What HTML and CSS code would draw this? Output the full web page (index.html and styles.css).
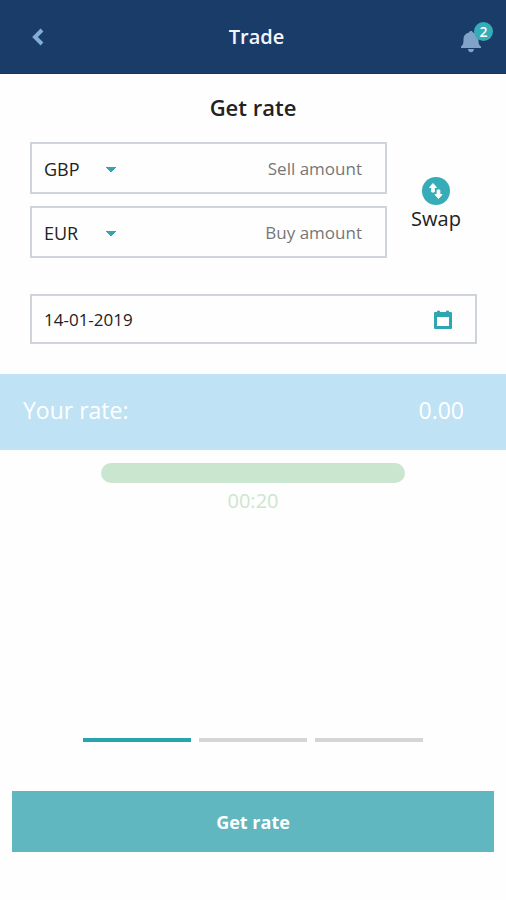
FILE: index.html
```html
<!DOCTYPE html>
<html lang="en">
<head>
<meta charset="utf-8">
<meta name="viewport" content="width=device-width, initial-scale=1">
<title>Trade</title>
<link rel="stylesheet" href="styles.css">
</head>
<body>
<header class="topbar">
  <button class="icon-button" type="button" aria-label="Back">
    <svg class="back-icon" width="12" height="18" viewBox="0 0 12 18"><path d="M10 2 3 9l7 7"/></svg>
  </button>
  <h1 class="topbar-title">Trade</h1>
  <button class="icon-button bell-button" type="button" aria-label="Notifications">
    <svg class="bell-icon" width="20" height="22" viewBox="0 0 20 22"><path d="M10 0C9 0 8.200.6 8 1.500 4.200 2.400 2.500 5 2.500 8.500c0 4-.5 5.500-2.500 7V17h20v-1.500c-2-1.500-2.500-3-2.500-7 0-3.500-1.700-6.100-5.500-7C11.800.6 11 0 10 0ZM7 18c.2 2 1.300 3.300 3 3.300s2.800-1.300 3-3.300Z"/></svg>
    <span class="badge">2</span>
  </button>
</header>
<main class="page">
  <h2 class="heading">Get rate</h2>
  <form class="form" id="rate-form">
    <div class="exchange">
      <div class="amounts">
        <div class="field">
          <select class="currency" aria-label="Sell currency"><option>GBP</option><option>EUR</option></select>
          <input class="amount" type="text" inputmode="decimal" placeholder="Sell amount" aria-label="Sell amount">
        </div>
        <div class="field">
          <select class="currency" aria-label="Buy currency"><option>EUR</option><option>GBP</option></select>
          <input class="amount" type="text" inputmode="decimal" placeholder="Buy amount" aria-label="Buy amount">
        </div>
      </div>
      <button class="swap" type="button">
        <svg width="28" height="28" viewBox="0 0 28 28"><circle cx="14" cy="14" r="14" fill="#35acb8"/><path fill="#fff" stroke="#fff" stroke-linejoin="round" d="m11 6.500 3.500 4h-2.200V15H9.700v-4.500H7.500ZM16.500 21.500 13 17.500h2.200V13h2.600v4.500H20Z"/></svg>
        <span>Swap</span>
      </button>
    </div>
    <div class="field date-field">
      <input class="date" type="text" value="14-01-2019" aria-label="Date">
      <button class="icon-button" type="button" aria-label="Choose date">
        <svg width="18" height="20" viewBox="0 0 18 20"><path fill="#2fa6b2" fill-rule="evenodd" d="M1 2h2V1q1.500-1 3 0v1h6V1q1.500-1 3 0v1h2q1 0 1 1v15q0 1-1 1H1q-1 0-1-1V3q0-1 1-1Zm2 5v9h12V7Z"/></svg>
      </button>
    </div>
  </form>
  <section class="rate"><span>Your rate:</span><span>0.00</span></section>
  <div class="timer">
    <div class="timer-bar"></div>
    <span>00:20</span>
  </div>
  <div class="steps"><span class="step current"></span><span class="step"></span><span class="step"></span></div>
  <button class="submit" type="submit" form="rate-form">Get rate</button>
</main>
</body>
</html>
```
FILE: styles.css
```css
* { box-sizing: border-box; }

body {
  margin: 0;
  min-height: 100vh;
  display: flex;
  flex-direction: column;
  background: #fefefe;
  color: #222;
  font-family: "Open Sans", "Noto Sans", sans-serif;
}

button, input, select { font: inherit; color: inherit; }

button, input {
  border: 0;
  padding: 0;
  background: none;
}

svg { display: block; }

.topbar {
  display: grid;
  grid-template-columns: 1fr auto 1fr;
  align-items: center;
  padding: 0 25px 0 32px;
  min-height: 74px;
  background: #193c68;
  border-bottom: 1px solid #0f3a6c;
  color: #f4f6ff;
}

.icon-button {
  cursor: pointer;
  justify-self: start;
}

.back-icon {
  fill: none;
  stroke: #83acd6;
  stroke-width: 4;
}

.topbar-title {
  margin: 0;
  font-size: 20px;
  line-height: 28px;
  font-weight: 600;
}

.bell-button {
  position: relative;
  justify-self: end;
  margin-top: 10px;
}

.bell-icon { fill: #81a2c9; }

.badge {
  position: absolute;
  top: -9px;
  right: -12px;
  width: 19px;
  height: 19px;
  border-radius: 50%;
  background: #35acb8;
  color: #fff;
  font-size: 14px;
  line-height: 19px;
  font-weight: 600;
  text-align: center;
}

.page {
  flex: 1;
  display: flex;
  flex-direction: column;
}

.heading {
  margin: 18px 0 20px;
  font-size: 22px;
  line-height: 30px;
  font-weight: 600;
  text-align: center;
}

.form {
  display: grid;
  gap: 36px;
  padding: 0 29px 0 30px;
}

.exchange {
  display: grid;
  grid-template-columns: 1fr 90px;
  align-items: center;
}

.amounts {
  display: grid;
  gap: 12px;
}

.field {
  display: flex;
  align-items: center;
  min-height: 52px;
  padding: 2px 23px 0 12px;
  border: 2px solid #cfd3da;
}

.currency {
  flex: none;
  width: 72px;
  border: 0;
  padding: 0;
  appearance: none;
  background: conic-gradient(from -45deg at 50% 100%, #2fa6b2 90deg, transparent 0) right center / 10px 5px no-repeat;
  font-size: 18px;
  line-height: 28px;
}

.amount {
  flex: 1;
  min-width: 0;
  font-size: 17px;
  line-height: 28px;
  text-align: right;
}

.amount::placeholder {
  color: #777;
  opacity: 1;
}

.swap {
  display: flex;
  flex-direction: column;
  align-items: center;
  padding: 10px 0 0 8px;
  font-size: 20px;
  line-height: 28px;
  cursor: pointer;
}

.date-field { min-height: 50px; }

.date {
  flex: 1;
  min-width: 0;
  font-size: 17px;
  line-height: 28px;
}

.rate {
  display: flex;
  justify-content: space-between;
  align-items: center;
  min-height: 76px;
  margin-top: 30px;
  padding: 0 42px 4px 23px;
  background: #c0e2f5;
  color: #fff;
  font-size: 23px;
  line-height: 30px;
}

.timer {
  display: flex;
  flex-direction: column;
  align-items: center;
  gap: 4px;
  margin-top: 13px;
  color: #cde6cf;
  font-size: 20px;
  line-height: 28px;
}

.timer-bar {
  width: 60%;
  height: 20px;
  border-radius: 10px;
  background: #cbe6ce;
}

.steps {
  display: grid;
  grid-template-columns: repeat(3, 1fr);
  gap: 8px;
  width: 67%;
  margin: auto auto 0;
}

.step {
  height: 4px;
  background: #d5d5d5;
}

.step.current { background: #27a4ad; }

.submit {
  min-height: 61px;
  margin: 49px 12px 48px;
  background: #60b7bf;
  color: #fff;
  font-size: 18px;
  line-height: 28px;
  font-weight: 700;
  cursor: pointer;
}
```
